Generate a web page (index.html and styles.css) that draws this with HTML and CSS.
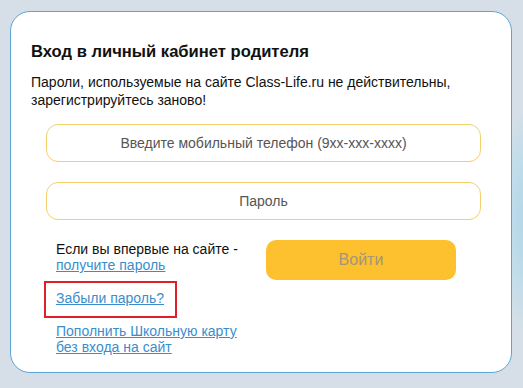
FILE: index.html
```html
<html>
  <head>
    <link rel="stylesheet" href="styles.css">
    <title>Вход в личный кабинет родителя</title>
  </head>
  <body>
    <div class="card">
      <h1 class="title">Вход в личный кабинет родителя</h1>
      <p class="notice">Пароли, используемые на сайте Class-Life.ru не действительны, зарегистрируйтесь заново!</p>
      <form class="login">
        <input class="field" type="tel" placeholder="Введите мобильный телефон (9xx-xxx-xxxx)">
        <input class="field" type="password" placeholder="Пароль">
        <div class="bottom">
          <div class="links">
            <div class="first">Если вы впервые на сайте -<br><a href="#">получите пароль</a></div>
            <div class="forgot"><a href="#">Забыли пароль?</a></div>
            <div class="card-pay"><a href="#">Пополнить Школьную карту<br>без входа на сайт</a></div>
          </div>
          <button class="enter" type="submit">Войти</button>
        </div>
      </form>
    </div>
  </body>
</html>
```

FILE: styles.css
```css
body {
  margin: 0;
  height: 388px;
  overflow: hidden;
  font-family: "Liberation Sans", Arial, sans-serif;
  background-color: #d6dfe7;
  background-image: radial-gradient(ellipse 40px 120px at 535px 220px, #a9d3e6 0%, #bfdceb 60%, rgba(214, 223, 231, 0) 100%);
}

.card {
  box-sizing: border-box;
  width: 502px;
  height: 362px;
  margin: 11px 0 0 10px;
  padding: 30px 20px 0 20px;
  background: #fff;
  border: 1px solid #5ca4d6;
  border-radius: 20px;
}

.title {
  margin: 0 0 11px 0;
  font-size: 16.6px;
  line-height: 20px;
  font-weight: bold;
  color: #111;
}

.notice {
  margin: 0 0 15px 0;
  font-size: 14px;
  line-height: 18px;
  color: #111;
}

.login {
  margin: 0 0 0 15px;
  width: 435px;
}

.field {
  display: block;
  box-sizing: border-box;
  width: 435px;
  height: 38px;
  margin: 0 0 20px 0;
  border: 1px solid #f5cf6e;
  border-radius: 12px;
  background: #fff;
  font-family: "Liberation Sans", Arial, sans-serif;
  font-size: 14px;
  text-align: center;
  outline: none;
}

.field::placeholder {
  color: #555;
}

.bottom {
  display: flex;
  align-items: flex-start;
  margin-top: 21px;
}

.links {
  width: 210px;
  margin-left: 10px;
  font-size: 14px;
  line-height: 16px;
  color: #111;
}

.links a {
  color: #3a8dcb;
  text-decoration: underline;
}

.forgot {
  margin: 8px 0 0 -12px;
  width: 111px;
  padding: 7px 8px 10px 10px;
  border: 2px solid #de1f2c;
}

.card-pay {
  margin-top: 5px;
}

.enter {
  width: 190px;
  height: 40px;
  margin-top: -1px;
  border: none;
  border-radius: 10px;
  background: #fdc02e;
  color: #a3967a;
  font-family: "Liberation Sans", Arial, sans-serif;
  font-size: 16px;
}
```
